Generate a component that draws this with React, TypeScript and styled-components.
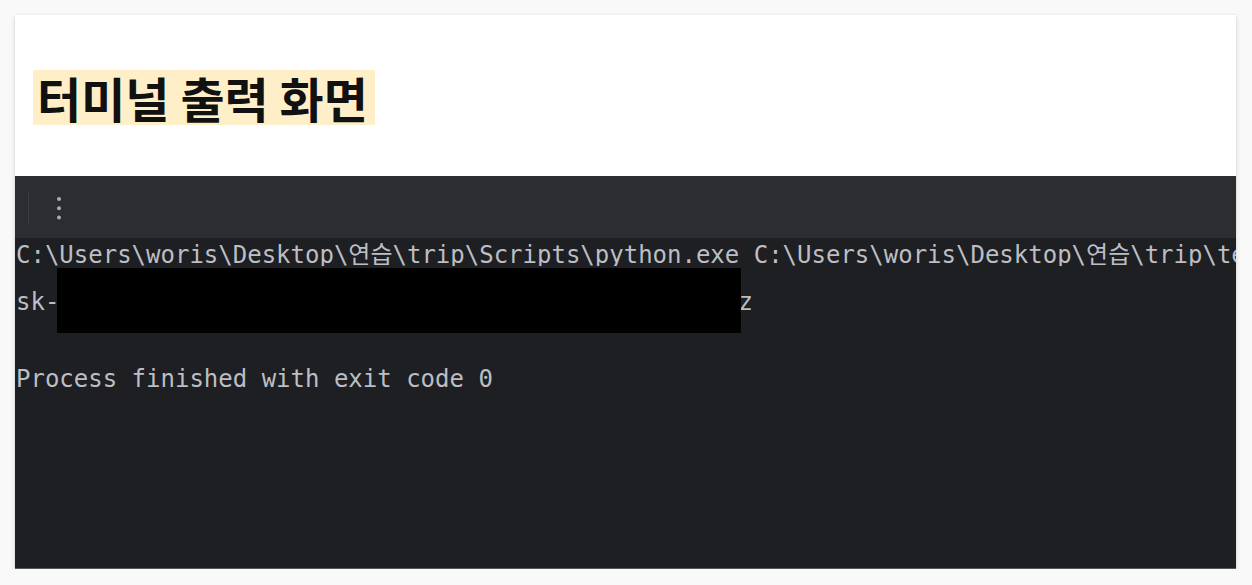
import React from "react";
import styled, { createGlobalStyle } from "styled-components";

const GlobalStyle = createGlobalStyle`
  html, body {
    margin: 0;
    padding: 0;
    background: #f9f9f9;
  }
  * { box-sizing: border-box; }
`;

const Page = styled.div`
  padding: 15px 16px 0 15px;
`;

const Card = styled.div`
  background: #ffffff;
  box-shadow: 0 2px 5px rgba(0, 0, 0, 0.14), 0 0 1px rgba(0, 0, 0, 0.12);
  overflow: hidden;
`;

const Header = styled.div`
  height: 161px;
  padding: 55px 0 0 18px;
`;

const Title = styled.h1`
  margin: 0;
  height: 55px;
  line-height: 55px;
  font-family: "Noto Sans CJK KR", "Noto Sans", sans-serif;
  font-weight: 700;
  font-size: 48px;
  color: #111111;
`;

const Highlight = styled.span`
  display: inline-block;
  vertical-align: top;
  height: 55px;
  line-height: 55px;
  padding: 0 7px 0 4px;
  background: #ffefc8;
`;

const Terminal = styled.div`
  height: 393px;
  background: #1e1f22;
  border-bottom: 1px solid #55585e;
  display: flex;
  flex-direction: column;
`;

const Toolbar = styled.div`
  height: 62px;
  flex: none;
  background: #2b2d30;
  display: flex;
  align-items: center;
  padding-left: 13px;
  gap: 27px;
`;

const Divider = styled.div`
  width: 1px;
  height: 33px;
  background: #393b40;
`;

const MoreButton = styled.div`
  width: 6px;
  height: 30px;
  display: flex;
  align-items: center;
  justify-content: center;
  margin-top: 1px;
`;

const Output = styled.div`
  position: relative;
  flex: 1;
  overflow: hidden;
  padding-left: 1px;
  font-family: "DejaVu Sans Mono", "Noto Sans CJK KR", monospace;
  font-size: 24px;
  color: #bcbec4;
  white-space: pre;
`;

const ClippedLine = styled.div`
  height: 25px;
  margin-top: 3px;
  line-height: 28px;
  overflow: hidden;
`;

const Line = styled.div<{ $gap?: number }>`
  height: 38.5px;
  line-height: 38.5px;
  margin-top: ${(p) => p.$gap ?? 0}px;
`;

const Redaction = styled.div`
  position: absolute;
  left: 42px;
  top: 30px;
  width: 684px;
  height: 65px;
  background: #000000;
`;

export default function App() {
  return (
    <>
      <GlobalStyle />
      <Page>
        <Card>
          <Header>
            <Title>
              <Highlight>터미널 출력 화면</Highlight>
            </Title>
          </Header>
          <Terminal>
            <Toolbar>
              <Divider />
              <MoreButton>
                <svg width="6" height="24" viewBox="0 0 6 24">
                  <circle cx="3" cy="3" r="2" fill="#a9acb3" />
                  <circle cx="3" cy="12.3" r="2" fill="#a9acb3" />
                  <circle cx="3" cy="21.5" r="2" fill="#a9acb3" />
                </svg>
              </MoreButton>
            </Toolbar>
            <Output>
              <ClippedLine>
                {"C:\\Users\\woris\\Desktop\\연습\\trip\\Scripts\\python.exe C:\\Users\\woris\\Desktop\\연습\\trip\\test.py"}
              </ClippedLine>
              <Line $gap={17}>{"sk-                                               z"}</Line>
              <Line />
              <Line>Process finished with exit code 0</Line>
              <Redaction />
            </Output>
          </Terminal>
        </Card>
      </Page>
    </>
  );
}
